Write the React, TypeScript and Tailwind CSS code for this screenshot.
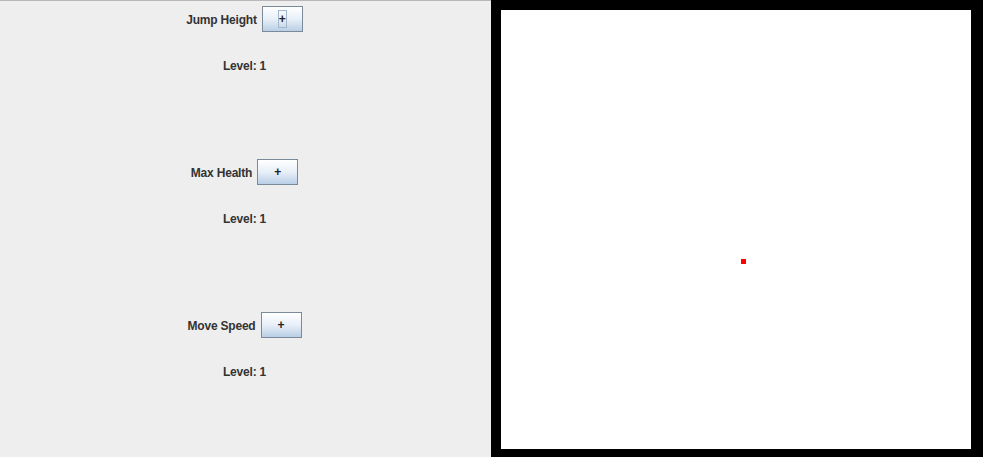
import React from "react";

const font = { fontFamily: '"Liberation Sans", Arial, sans-serif' };

function PlusButton({ focused }: { focused?: boolean }) {
  return (
    <button
      className="flex h-[26px] w-[41px] items-center justify-center border border-[#7a8a99] bg-gradient-to-b from-[#ffffff] via-[#e8eff8] to-[#b9cfe6] text-[12px] font-bold leading-none text-[#222]"
      style={font}
    >
      {focused ? (
        <span className="flex h-[18px] w-[9px] items-center justify-center border border-[#a3b8cc]">
          +
        </span>
      ) : (
        <span>+</span>
      )}
    </button>
  );
}

function Section({ label, focused }: { label: string; focused?: boolean }) {
  return (
    <div className="flex h-[153px] flex-col items-center pt-[5px]">
      <div className="flex items-center gap-[5px]">
        <span className="pt-[2px] text-[12px] font-bold leading-[15px] tracking-[-0.2px] text-[#333333]" style={font}>
          {label}
        </span>
        <PlusButton focused={focused} />
      </div>
      <div className="mt-[27px] text-[12px] font-bold leading-[15px] tracking-[-0.2px] text-[#333333]" style={font}>
        Level: 1
      </div>
    </div>
  );
}

export default function App() {
  return (
    <div className="flex h-[457px] w-[983px] overflow-hidden">
      <div className="h-full w-[491px] border-t border-[#b8b8b8] bg-[#eeeeee] pr-[2px]">
        <Section label="Jump Height" focused />
        <Section label="Max Health" />
        <Section label="Move Speed" />
      </div>
      <div className="flex h-full flex-1 bg-black pl-[10px] pr-[12px] pt-[10px] pb-[8px]">
        <div className="relative flex-1 bg-white">
          <div className="absolute left-[240px] top-[249px] h-[5px] w-[5px] bg-[#ff0000]" />
        </div>
      </div>
    </div>
  );
}
